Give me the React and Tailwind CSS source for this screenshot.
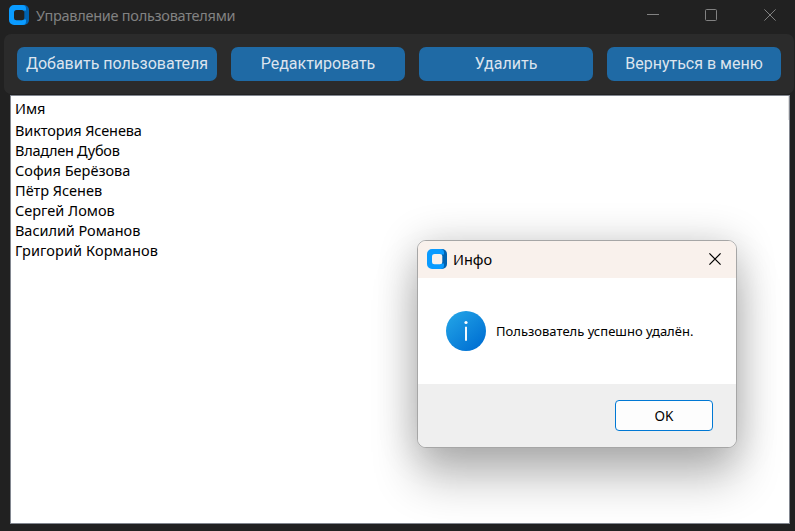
const users = [
  { name: 'Виктория Ясенева', tracking: 'tracking-[-0.12px]' },
  { name: 'Владлен Дубов', tracking: 'tracking-[-0.28px]' },
  { name: 'София Берёзова', tracking: 'tracking-normal' },
  { name: 'Пётр Ясенев', tracking: 'tracking-normal' },
  { name: 'Сергей Ломов', tracking: 'tracking-normal' },
  { name: 'Василий Романов', tracking: 'tracking-[-0.05px]' },
  { name: 'Григорий Корманов', tracking: 'tracking-[0.1px]' },
];

const actions = [
  { label: 'Добавить пользователя', width: 'w-[200px]' },
  { label: 'Редактировать', width: 'w-[174px]' },
  { label: 'Удалить', width: 'w-[174px]' },
  { label: 'Вернуться в меню', width: 'w-[174px]' },
];

function AppLogo() {
  return (
    <svg className="size-5 shrink-0" viewBox="0 0 20 20">
      <path d="M14 0h1a5 5 0 0 1 5 5v10a5 5 0 0 1-5 5h-1z" fill="#0062b1" />
      <path d="M5 0h8.500a3.500 3.500 0 0 1 3.500 3.500v2H15v9h2v2a3.500 3.500 0 0 1-3.500 3.500H5a5 5 0 0 1-5-5V5a5 5 0 0 1 5-5z" fill="#0a9bff" />
      <rect x="5" y="5" width="10.300" height="10.300" rx="2.500" className="fill-(--logo-hole)" />
    </svg>
  );
}

function CloseIcon({ className }) {
  return (
    <svg className={className} viewBox="0 0 12 12" fill="none" stroke="currentColor">
      <path d="M0.400 0.400 11.600 11.600M11.600 0.400 0.400 11.600" />
    </svg>
  );
}

function TitleBar() {
  return (
    <header className="flex h-[34px] items-center pb-[4px] pl-[9px] pr-[19px] text-[#828282] [--logo-hole:#212121]">
      <AppLogo />
      <h1 className="ml-[7px] flex-1 whitespace-nowrap text-[14.500px] leading-5 tracking-[-0.27px]">Управление пользователями</h1>
      <svg className="h-3 w-3" viewBox="0 0 12 12" stroke="currentColor">
        <path d="M0 5.500h12" />
      </svg>
      <svg className="ml-[46px] h-3 w-3" viewBox="0 0 12 12" fill="none" stroke="currentColor">
        <rect x="0.500" y="0.500" width="11" height="11" rx="1" />
      </svg>
      <CloseIcon className="ml-[47px] h-3 w-3" />
    </header>
  );
}

function Toolbar() {
  return (
    <nav className="ml-1 mr-px flex h-[60px] gap-[14px] rounded-[7px] bg-[#2b2b2b] pl-[13px] pt-[13px]">
      {actions.map(({ label, width }) => (
        <button
          key={label}
          className={`${width} h-[34px] shrink-0 whitespace-nowrap rounded-[7px] bg-[#1f6aa5] pb-px font-[family-name:Roboto] text-[16px] leading-5 text-[#dce4ee]`}
        >
          {label}
        </button>
      ))}
    </nav>
  );
}

function UserList() {
  return (
    <section className="ml-[10px] mr-[5px] mt-px h-[429px] border border-[#828790] bg-white pl-[4px] text-[14.500px] text-black">
      <div className="flex">
        <h2 className="h-6 flex-1 leading-6">Имя</h2>
        <span className="h-6 w-px bg-[#e0e0e0]" />
      </div>
      <ul>
        {users.map(({ name, tracking }) => (
          <li key={name} className={`${tracking} h-5 leading-5`}>
            {name}
          </li>
        ))}
      </ul>
    </section>
  );
}

function InfoDialog() {
  return (
    <div
      role="dialog"
      className="absolute left-[417px] top-[240px] flex h-[208px] w-[320px] flex-col overflow-hidden rounded-[9px] border border-[#a6a6a6] bg-white text-black shadow-[0_32px_46px_0px_rgba(0,0,0,0.24),0_2px_40px_0px_rgba(0,0,0,0.2)]"
    >
      <div className="flex h-[37px] items-center bg-[#f9f1ec] pb-px pl-[9px] pr-[15px] [--logo-hole:#f9f1ec]">
        <AppLogo />
        <h2 className="ml-[6px] flex-1 text-[14.500px] leading-5">Инфо</h2>
        <CloseIcon className="h-3 w-3 stroke-[1.2]" />
      </div>
      <div className="flex h-[106px] items-center pl-[28px]">
        <svg className="size-10 shrink-0" viewBox="0 0 40 40">
          <defs>
            <linearGradient id="info" x1="0.150" y1="0.100" x2="0.850" y2="0.900">
              <stop offset="0" stopColor="#20a0e5" />
              <stop offset="1" stopColor="#0070d3" />
            </linearGradient>
          </defs>
          <circle cx="20" cy="20" r="20" fill="url(#info)" />
          <circle cx="20" cy="11.500" r="1.600" fill="#fff" />
          <path d="M20 15.800v14" stroke="#fff" strokeWidth="1.900" />
        </svg>
        <p className="ml-[10px] whitespace-nowrap pb-px text-[13px] leading-5">Пользователь успешно удалён.</p>
      </div>
      <div className="flex flex-1 justify-end bg-[#efefef] pr-[23px] pt-4">
        <button className="h-[31px] w-[98px] rounded-[4px] border border-[#0078d4] bg-[#fdfdfd] text-[13.500px] leading-5">OK</button>
      </div>
    </div>
  );
}

export default function App() {
  return (
    <main className="relative h-[531px] w-[795px] overflow-hidden bg-[#212121] font-['Noto_Sans',sans-serif]">
      <TitleBar />
      <Toolbar />
      <UserList />
      <InfoDialog />
    </main>
  );
}
